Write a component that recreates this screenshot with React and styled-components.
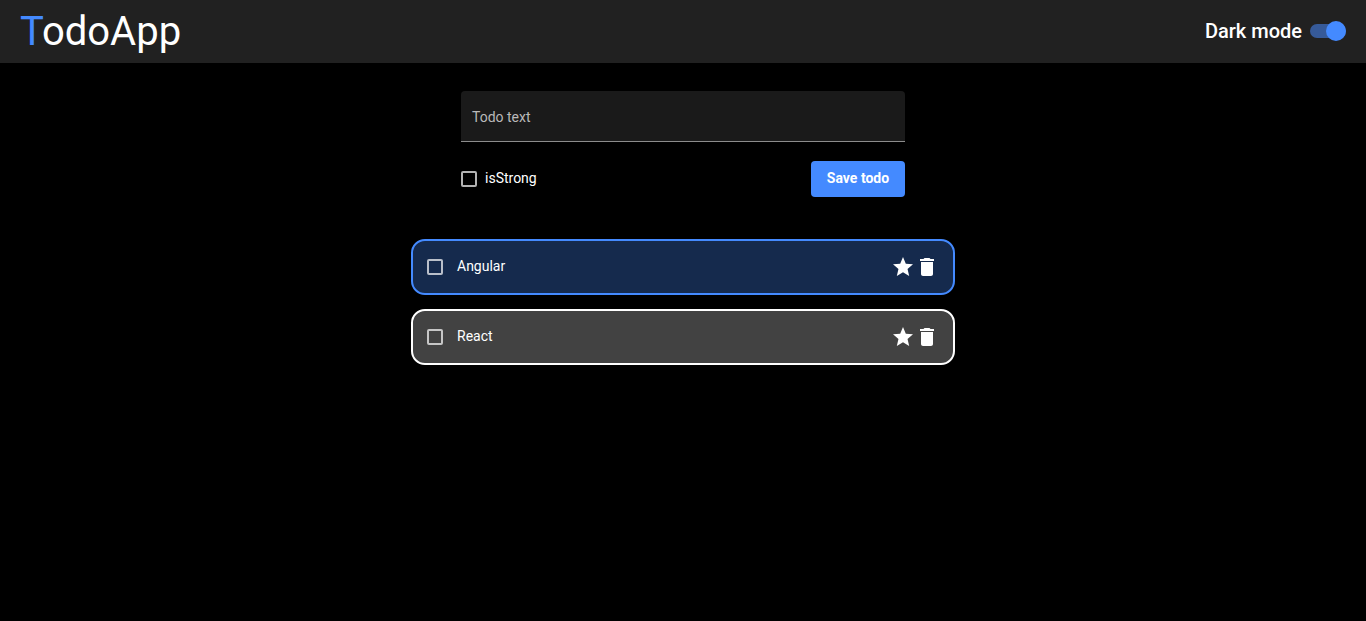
import React from 'react';
import styled, { createGlobalStyle } from 'styled-components';

const GlobalStyle = createGlobalStyle`
  *, *::before, *::after { box-sizing: border-box; }
  body {
    margin: 0;
    background: #000;
    color: #fff;
    font: 400 14px/20px Roboto, sans-serif;
  }
`;

const Header = styled.header`
  display: flex;
  align-items: center;
  justify-content: space-between;
  height: 63px;
  padding: 0 20px;
  background: #212121;
`;

const Logo = styled.h1`
  margin: 0;
  font-size: 40px;
  font-weight: 400;
  line-height: 63px;
`;

const Accent = styled.span`
  color: #448aff;
`;

const ThemeSwitch = styled.label`
  display: flex;
  align-items: center;
  gap: 8px;
  padding-bottom: 1px;
  font-size: 20px;
  font-weight: 500;
  line-height: 24px;
`;

const Track = styled.span`
  display: flex;
  align-items: center;
  justify-content: flex-end;
  width: 36px;
  height: 14px;
  border-radius: 8px;
  background: #365a99;
`;

const Thumb = styled.span`
  width: 20px;
  height: 20px;
  flex: none;
  border-radius: 50%;
  background: #448aff;
`;

const Form = styled.form`
  width: 444px;
  margin: 28px auto 0;
`;

const TextField = styled.div`
  display: flex;
  align-items: center;
  height: 51px;
  padding: 2px 11px 0;
  border-bottom: 1px solid #8c8c8c;
  border-radius: 4px 4px 0 0;
  background: #1a1a1a;
  color: #b9b9b9;
`;

const FormActions = styled.div`
  display: flex;
  align-items: center;
  justify-content: space-between;
  margin-top: 19px;
`;

const CheckLabel = styled.label`
  display: flex;
  align-items: center;
  gap: ${({ $gap }) => $gap}px;
`;

const Box = styled.span`
  width: 16px;
  height: 16px;
  border: 2px solid rgba(255, 255, 255, 0.7);
  border-radius: 2px;
`;

const LabelText = styled.span`
  padding-bottom: 2px;
`;

const SaveButton = styled.button`
  width: 94px;
  height: 36px;
  padding: 0 0 2px;
  border: 0;
  border-radius: 4px;
  background: #448aff;
  color: #fff;
  font: 700 14px/34px Roboto, sans-serif;
`;

const List = styled.ul`
  display: flex;
  flex-direction: column;
  gap: 14px;
  width: 544px;
  margin: 42px auto 0;
  padding: 0;
  list-style: none;
`;

const Item = styled.li`
  display: flex;
  align-items: center;
  justify-content: space-between;
  height: 56px;
  padding: 0 14px;
  border: 2px solid ${({ $strong }) => ($strong ? '#448aff' : '#fff')};
  border-radius: 14px;
  background: ${({ $strong }) => ($strong ? '#152a4d' : '#424242')};
`;

const Actions = styled.div`
  display: flex;
`;

const Icon = styled.svg`
  display: block;
  width: 24px;
  height: 24px;
  fill: #fff;
`;

const todos = [
  { text: 'Angular', strong: true },
  { text: 'React', strong: false },
];

function Checkbox({ text, gap }) {
  return (
    <CheckLabel $gap={gap}>
      <Box />
      <LabelText>{text}</LabelText>
    </CheckLabel>
  );
}

export default function App() {
  return (
    <>
      <GlobalStyle />
      <Header>
        <Logo><Accent>T</Accent>odoApp</Logo>
        <ThemeSwitch>Dark mode<Track><Thumb /></Track></ThemeSwitch>
      </Header>
      <main>
        <Form>
          <TextField>Todo text</TextField>
          <FormActions>
            <Checkbox text="isStrong" gap={8} />
            <SaveButton type="button">Save todo</SaveButton>
          </FormActions>
        </Form>
        <List>
          {todos.map(({ text, strong }) => (
            <Item key={text} $strong={strong}>
              <Checkbox text={text} gap={14} />
              <Actions>
                <Icon viewBox="0 0 24 24">
                  <path d="M12 17.27 18.18 21l-1.64-7.03L22 9.24l-7.19-.61L12 2 9.19 8.63 2 9.24l5.46 4.73L5.82 21z" />
                </Icon>
                <Icon viewBox="0 0 24 24">
                  <path d="M6 19c0 1.1.9 2 2 2h8c1.1 0 2-.9 2-2V7H6v12zM19 4h-3.5l-1-1h-5l-1 1H5v2h14V4z" />
                </Icon>
              </Actions>
            </Item>
          ))}
        </List>
      </main>
    </>
  );
}
